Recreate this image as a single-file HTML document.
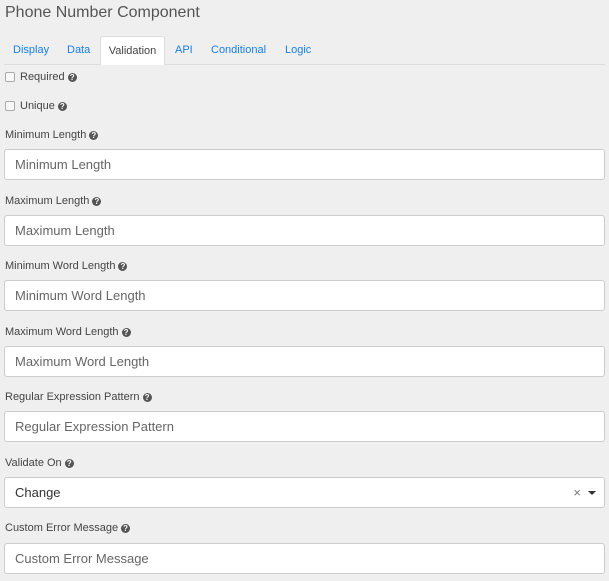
<!DOCTYPE html>
<html><head><style>
body{margin:0;width:609px;height:581px;background:#efefef;font-family:"Liberation Sans",sans-serif;position:relative;overflow:hidden;color:#333}
.a{position:absolute}
.title{left:5px;top:4px;font-size:16px;color:#555}
.tabline{left:4px;right:4px;top:64px;height:1px;background:#ddd}
.tab{top:36px;height:28px;line-height:28px;font-size:11px;color:#1a7fe6}
.act{left:100px;width:65px;background:#fff;border:1px solid #ddd;border-bottom:none;border-radius:3px 3px 0 0;color:#444;text-align:center;box-sizing:border-box;height:29px}
.lbl{left:5px;font-size:11px;color:#444}
.q{display:inline-block;width:9px;height:9px;border-radius:50%;background:#555;color:#fff;font-size:8px;line-height:9px;text-align:center;font-weight:bold;vertical-align:-1px;margin-left:3px;position:relative;top:-1px}
.cb{left:5px;width:8px;height:8px;border:1px solid #aaa;border-radius:2px;background:#f8f8f8}
.in{left:4px;width:601px;height:31px;box-sizing:border-box;background:#fff;border:1px solid #ccc;border-radius:3px;font-size:13px;color:#666;line-height:29px;padding-left:10px}
</style></head><body>
<div class="a title">Phone Number Component</div>
<div class="a tabline"></div>
<div class="a tab" style="left:13px">Display</div>
<div class="a tab" style="left:67px">Data</div>
<div class="a tab act">Validation</div>
<div class="a tab" style="left:175px">API</div>
<div class="a tab" style="left:211px">Conditional</div>
<div class="a tab" style="left:285px">Logic</div>
<div class="a cb" style="top:72px"></div><div class="a lbl" style="left:20px;top:71px">Required<span class="q">?</span></div>
<div class="a cb" style="top:101px"></div><div class="a lbl" style="left:20px;top:100px">Unique<span class="q">?</span></div>
<div class="a lbl" style="top:129px">Minimum Length<span class="q">?</span></div>
<div class="a in" style="top:149px">Minimum Length</div>
<div class="a lbl" style="top:195px">Maximum Length<span class="q">?</span></div>
<div class="a in" style="top:215px">Maximum Length</div>
<div class="a lbl" style="top:260px">Minimum Word Length<span class="q">?</span></div>
<div class="a in" style="top:280px">Minimum Word Length</div>
<div class="a lbl" style="top:326px">Maximum Word Length<span class="q">?</span></div>
<div class="a in" style="top:346px">Maximum Word Length</div>
<div class="a lbl" style="top:391px">Regular Expression Pattern<span class="q">?</span></div>
<div class="a in" style="top:411px">Regular Expression Pattern</div>
<div class="a lbl" style="top:457px">Validate On<span class="q">?</span></div>
<div class="a in" style="top:477px;color:#333">Change<span style="position:absolute;right:23px;top:0;font-size:13px;color:#777">×</span><span style="position:absolute;right:8px;top:13px;width:0;height:0;border-left:4px solid transparent;border-right:4px solid transparent;border-top:4px solid #333"></span></div>
<div class="a lbl" style="top:522px">Custom Error Message<span class="q">?</span></div>
<div class="a in" style="top:543px">Custom Error Message</div>
</body></html>
